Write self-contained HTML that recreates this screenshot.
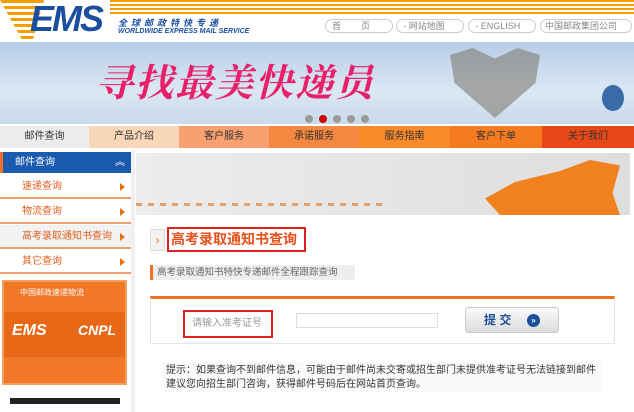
<html><head><style>
body{margin:0;width:634px;height:412px;overflow:hidden;background:#fff;font-family:"Liberation Sans","Noto Sans CJK SC",sans-serif;position:relative}
div{position:absolute;box-sizing:border-box}
.nav div{top:0;height:22px;font-size:10px;line-height:22px;text-align:center;color:#333}
.side{left:0;width:131px;height:24px;background:#fff;border-bottom:2px solid #f0a070;font-size:10px;color:#e06020;line-height:24px;padding-left:22px}
.side:after{content:"";position:absolute;right:6px;top:8px;border-left:5px solid #e8700a;border-top:4px solid transparent;border-bottom:4px solid transparent}
</style></head><body>
<!-- header -->
<div style="left:110px;top:0;width:524px;height:15px;background:repeating-linear-gradient(#f5a000 0 2px,#fff 2px 4px)"></div>
<div style="left:0;top:0;width:110px;height:40px;background:repeating-linear-gradient(#f5a000 0 3px,#fff 3px 6px);clip-path:polygon(0 0,40% 0,30% 100%,20% 100%)"></div>
<div style="left:30px;top:0;font:italic bold 36px/38px 'Liberation Sans';color:#1a4fa0;letter-spacing:-2px">EMS</div>
<div style="left:118px;top:16px;font:bold italic 9px 'Liberation Sans','Noto Sans CJK SC';color:#1a4fa0;letter-spacing:4px">全球邮政特快专递</div>
<div style="left:118px;top:28px;font:bold italic 7px 'Liberation Sans';color:#1a4fa0">WORLDWIDE EXPRESS MAIL SERVICE</div>
<div style="left:325px;top:19px;width:68px;height:14px;border:1px solid #ccc;border-radius:7px;font-size:9px;color:#888;line-height:12px;padding-left:6px">首&nbsp;&nbsp;&nbsp;&nbsp;&nbsp;&nbsp;&nbsp;&nbsp;页</div>
<div style="left:396px;top:19px;width:68px;height:14px;border:1px solid #ccc;border-radius:7px;font-size:9px;color:#888;line-height:12px;padding-left:6px">◦ 网站地图</div>
<div style="left:468px;top:19px;width:68px;height:14px;border:1px solid #ccc;border-radius:7px;font-size:9px;color:#888;line-height:12px;padding-left:6px">◦ ENGLISH</div>
<div style="left:540px;top:19px;width:92px;height:14px;border:1px solid #ccc;border-radius:7px;font-size:9px;color:#888;line-height:12px;padding-left:4px">中国邮政集团公司</div>
<!-- banner -->
<div style="left:0;top:42px;width:634px;height:82px;background:linear-gradient(180deg,#b6cde6,#dbe7f3 60%,#c9daec)"></div>
<div style="left:95px;top:58px;font:italic bold 38px/44px 'Noto Serif CJK SC',serif;color:#e8206a;letter-spacing:2px">寻找最美快递员</div>
<div style="left:450px;top:48px;width:90px;height:70px;background:#7a7268;opacity:.55;clip-path:polygon(0 10%,25% 0,50% 15%,75% 0,100% 10%,95% 50%,50% 100%,5% 50%)"></div>
<div style="left:602px;top:85px;width:22px;height:26px;border-radius:50%;background:#3a6aa8"></div>
<div style="left:305px;top:115px;width:8px;height:8px;border-radius:50%;background:#999"></div>
<div style="left:319px;top:115px;width:8px;height:8px;border-radius:50%;background:#c00"></div>
<div style="left:333px;top:115px;width:8px;height:8px;border-radius:50%;background:#999"></div>
<div style="left:347px;top:115px;width:8px;height:8px;border-radius:50%;background:#999"></div>
<div style="left:361px;top:115px;width:8px;height:8px;border-radius:50%;background:#999"></div>
<!-- nav -->
<div class="nav" style="left:0;top:126px;width:634px;height:22px">
<div style="left:0;width:89px;background:#ececec">邮件查询</div>
<div style="left:89px;width:90px;background:#f8d6b8">产品介绍</div>
<div style="left:179px;width:90px;background:#f8a070">客户服务</div>
<div style="left:269px;width:90px;background:#f58840">承诺服务</div>
<div style="left:359px;width:91px;background:#f88a2a">服务指南</div>
<div style="left:450px;width:92px;background:#f57a20">客户下单</div>
<div style="left:542px;width:92px;background:#e84818">关于我们</div>
</div>
<!-- sidebar -->
<div style="left:0;top:152px;width:131px;height:21px;background:#1a5bb0;color:#fff;font-size:10px;line-height:21px;padding-left:12px;border-left:3px solid #f07020">邮件查询<span style="position:absolute;right:6px">︽</span></div>
<div class="side" style="top:175px">速递查询</div>
<div class="side" style="top:200px">物流查询</div>
<div class="side" style="top:225px;background:#f2f2f2">高考录取通知书查询</div>
<div class="side" style="top:250px">其它查询</div>
<div style="left:2px;top:280px;width:125px;height:105px;background:#f07828;border:2px solid #f5a060"></div>
<div style="left:4px;top:312px;width:121px;height:45px;background:#e86818"></div>
<div style="left:20px;top:287px;color:#fff;font-size:8px">中国邮政速递物流</div>
<div style="left:12px;top:322px;color:#fff;font:italic bold 16px 'Liberation Sans'">EMS</div>
<div style="left:78px;top:322px;color:#fff;font:italic bold 14px 'Liberation Sans'">CNPL</div>
<div style="left:10px;top:398px;width:110px;height:14px;background:#fff;border-top:6px solid #222"></div>
<div style="left:131px;top:150px;width:4px;height:262px;background:#f0f0f0"></div>
<!-- main -->
<div style="left:136px;top:153px;width:494px;height:62px;background:linear-gradient(90deg,#ececec,#dedede)"></div>
<div style="left:136px;top:203px;width:250px;height:3px;background:repeating-linear-gradient(90deg,#e0a070 0 6px,transparent 6px 12px)"></div>
<div style="left:470px;top:160px;width:150px;height:55px;background:#f08020;clip-path:polygon(30% 40%,60% 20%,80% 0,100% 10%,95% 60%,100% 100%,20% 100%,10% 70%)"></div>
<div style="left:150px;top:229px;width:15px;height:22px;background:#f2f2f2;border:1px solid #ddd;color:#f07020;font-size:12px;text-align:center;line-height:20px">›</div>
<div style="left:167px;top:227px;width:139px;height:25px;border:2px solid #e02020;color:#e8501a;font-size:14px;font-weight:bold;line-height:21px;padding-left:2px">高考录取通知书查询</div>
<div style="left:150px;top:265px;width:205px;height:15px;background:#eee;border-left:3px solid #f07020;font-size:9.5px;color:#666;line-height:15px;padding-left:4px">高考录取通知书特快专递邮件全程跟踪查询</div>
<div style="left:150px;top:296px;width:465px;height:48px;border:1px solid #e6e6e6;border-top:3px solid #f07020"></div>
<div style="left:183px;top:310px;width:90px;height:28px;border:2px solid #e02020;font-size:10px;color:#999;line-height:24px;padding-left:7px">请输入准考证号</div>
<div style="left:296px;top:313px;width:142px;height:15px;border:1px solid #ddd"></div>
<div style="left:465px;top:307px;width:94px;height:26px;border:1px solid #ccc;border-radius:3px;background:linear-gradient(#fafafa,#dcdcdc);font-size:12px;font-weight:bold;color:#1a4f9a;line-height:24px;padding-left:18px">提 交<span style="position:absolute;left:61px;top:6px;width:13px;height:13px;border-radius:50%;background:#1a4f9a;color:#fff;font-size:8px;line-height:13px;text-align:center">»</span></div>
<div style="left:162px;top:362px;width:440px;height:30px;background:#fafafa;font-size:10px;color:#333;line-height:14px;padding-left:4px;padding-top:2px">提示：如果查询不到邮件信息，可能由于邮件尚未交寄或招生部门未提供准考证号无法链接到邮件<br>建议您向招生部门咨询，获得邮件号码后在网站首页查询。</div>
</body></html>
